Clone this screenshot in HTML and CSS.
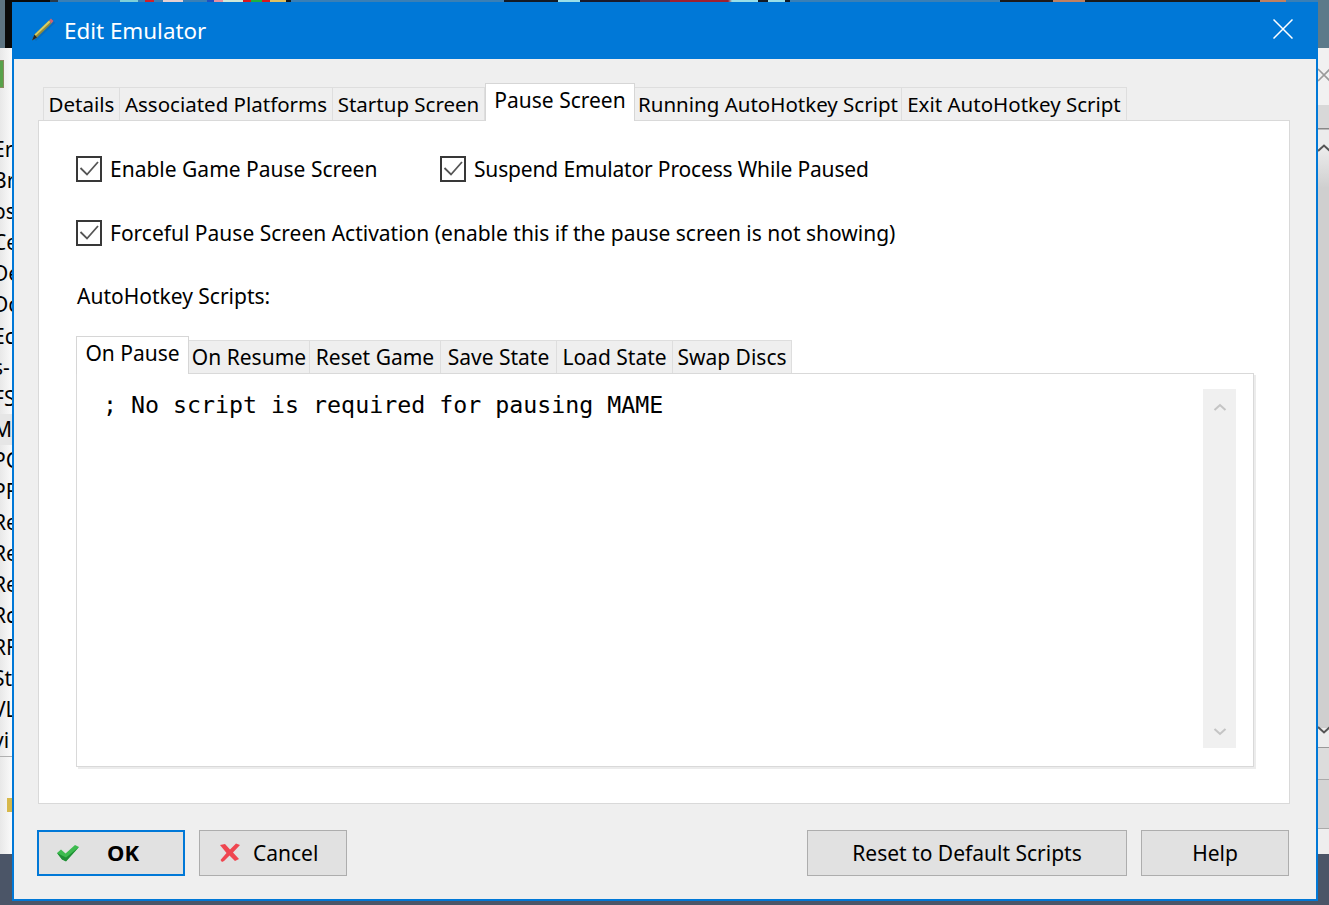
FILE: index.html
```html
<!DOCTYPE html>
<html lang="en">
<head>
<meta charset="utf-8">
<title>Edit Emulator</title>
<link rel="stylesheet" href="styles.css">
</head>
<body>
<div class="desktop">
  <div class="strip"></div>
  <div class="behind-left">
    <div class="green-icon"></div>
    <ul class="behind-list">
      <li>Er</li><li>Br</li><li>os</li><li>Ce</li><li>De</li><li>Dc</li><li>Ec</li><li>s-</li><li>FS</li><li class="sel">M/</li><li>PC</li><li>PF</li><li>Re</li><li>Re</li><li>Re</li><li>Rc</li><li>RF</li><li>St</li><li>VL</li><li class="last">vi</li>
    </ul>
    <div class="yellow-icon"></div>
  </div>
  <div class="behind-right">
    <svg class="behind-x" viewBox="0 0 14 14"><path d="M1 1L13 13M13 1L1 13" stroke="#9a9a9a" stroke-width="1.6" fill="none"/></svg>
    <svg class="behind-up" viewBox="0 0 14 8"><path d="M1 7L7 1.500L13 7" stroke="#555" stroke-width="2" fill="none"/></svg>
    <svg class="behind-down" viewBox="0 0 14 8"><path d="M1 1L7 6.500L13 1" stroke="#555" stroke-width="2" fill="none"/></svg>
  </div>

  <div class="dialog">
    <header class="titlebar">
      <svg class="pencil" viewBox="0 0 24 24">
        <path d="M5 24L24 6L21 1.500L1.500 20.500Z" fill="#0a5da8" opacity="0.45"/>
        <path d="M3.500 17.500L18 3.500L20.500 6.500L6 20.500L1 23.500Z" fill="#8f8a3c"/>
        <path d="M3.500 17.500L18 3.500L19.500 5L4.500 19Z" fill="#d8cd62"/>
        <path d="M3.500 17.500L1 23.500L6 20.500Z" fill="#262626"/>
        <path d="M18 3.500L20 1.500L22.500 4L20.500 6.500Z" fill="#cf6470"/>
      </svg>
      <span class="title">Edit Emulator</span>
      <svg class="close" viewBox="0 0 20 20"><path d="M0.500 0.500L19.500 19.500M19.500 0.500L0.500 19.500" stroke="#fff" stroke-width="1.500" fill="none"/></svg>
    </header>
    <div class="client">
      <nav class="tabs outer-tabs">
        <span class="tab">Details</span>
        <span class="tab">Associated Platforms</span>
        <span class="tab">Startup Screen</span>
        <span class="tab active">Pause Screen</span>
        <span class="tab">Running AutoHotkey Script</span>
        <span class="tab">Exit AutoHotkey Script</span>
      </nav>
      <section class="panel">
        <div class="check-row">
          <label class="check check-first"><span class="box"><svg viewBox="0 0 22 22"><path d="M2.500 10L9 16.500L20 4" stroke="#555" stroke-width="1.800" fill="none"/></svg></span>Enable Game Pause Screen</label>
          <label class="check check-tight"><span class="box"><svg viewBox="0 0 22 22"><path d="M2.500 10L9 16.500L20 4" stroke="#555" stroke-width="1.800" fill="none"/></svg></span>Suspend Emulator Process While Paused</label>
        </div>
        <div class="check-row second">
          <label class="check"><span class="box"><svg viewBox="0 0 22 22"><path d="M2.500 10L9 16.500L20 4" stroke="#555" stroke-width="1.800" fill="none"/></svg></span>Forceful Pause Screen Activation (enable this if the pause screen is not showing)</label>
        </div>
        <div class="scripts-label">AutoHotkey Scripts:</div>
        <nav class="tabs inner-tabs">
          <span class="tab active">On Pause</span>
          <span class="tab">On Resume</span>
          <span class="tab">Reset Game</span>
          <span class="tab">Save State</span>
          <span class="tab">Load State</span>
          <span class="tab">Swap Discs</span>
        </nav>
        <div class="editor-wrap">
          <div class="editor">
            <pre class="code">; No script is required for pausing MAME</pre>
            <div class="scrollbar">
              <svg viewBox="0 0 14 8"><path d="M1.500 7L7 2L12.500 7" stroke="#c4c4c4" stroke-width="2" fill="none"/></svg>
              <svg viewBox="0 0 14 8"><path d="M1.500 1L7 6L12.500 1" stroke="#c4c4c4" stroke-width="2" fill="none"/></svg>
            </div>
          </div>
        </div>
      </section>
      <footer class="buttons">
        <button class="btn btn-ok" type="button">
          <svg class="btn-icon" viewBox="0 0 24 20"><path d="M1 10L5 6.500L9.500 10.500L19 2L23 4L10 18L6 16.500Z" fill="#3dbb4f"/><path d="M1 10L6 16.500L10 18.500L23 4L10 14.500Z" fill="#1f8f35"/></svg>
          <span class="ok-text">OK</span>
        </button>
        <button class="btn btn-cancel" type="button">
          <svg class="btn-icon" viewBox="0 0 24 20"><path d="M1 2L6 1L11 6.500L17 0.500L21 2L14 9.500L20 16L16 18L10.500 12.500L5 18L3 19L1.500 17L7.500 10Z" fill="#ef4650"/></svg>
          <span>Cancel</span>
        </button>
        <span class="spacer"></span>
        <button class="btn btn-reset" type="button">Reset to Default Scripts</button>
        <button class="btn btn-help" type="button">Help</button>
      </footer>
    </div>
  </div>
</div>
</body>
</html>
```
FILE: styles.css
```css
* { box-sizing: border-box; }
html, body { margin: 0; padding: 0; }
body { width: 1329px; height: 905px; overflow: hidden; background: #4b5567; font-family: "Noto Sans", sans-serif; color: #000; }

.desktop { position: relative; width: 1329px; height: 905px; overflow: hidden; background: #4b5567; }

/* Parts of other windows showing behind the dialog */
.strip { position: absolute; left: 0; top: 0; width: 1329px; height: 48px;
  background: linear-gradient(90deg,
    #5d7482 0 5px, #0a0a0a 5px 50px, #2a3a4a 50px 58px, #3a7fb5 58px 120px, #7fd0d8 120px 138px, #3a7fb5 138px 145px,
    #d0202a 145px 154px, #3a7fb5 154px 163px, #e8d0d0 163px 183px, #3a7fb5 183px 207px, #2050c0 207px 214px, #e890a0 214px 223px,
    #d0e8d8 223px 243px, #d81820 243px 251px, #20b040 251px 262px, #d81820 262px 270px, #e0c060 270px 286px, #1a1a1a 286px 291px,
    #3a7fb5 291px 504px, #141a24 504px 558px, #9adfe8 558px 580px, #1a1a2a 580px 640px, #503050 640px 670px, #a02030 670px 728px,
    #9adfe8 732px 758px, #141a24 758px 768px, #9adfe8 768px 785px, #141a24 785px 790px, #3a7fb5 790px 1000px, #1a1a1a 1000px 1053px,
    #c08060 1053px 1085px, #1a1a1a 1085px 1260px, #c08060 1260px 1286px, #3a7fb5 1286px 1318px, #5c7a8a 1318px 1329px); }
.behind-left { position: absolute; left: 0; top: 48px; width: 12px; height: 806px; background: linear-gradient(90deg, #e8e8e8, #fafafa); overflow: hidden; border-bottom: 0; }
.green-icon { position: absolute; left: -10px; top: 12px; width: 14px; height: 28px; background: #58a24a; border: 1px solid #8a8a60; }
.behind-list { position: absolute; left: -7px; top: 86px; margin: 0; padding: 0; list-style: none; font-size: 21px; line-height: 31.100px; white-space: nowrap; }
.behind-list .sel { background: #e6e6e6; width: 20px; }
.behind-list .last { border-bottom: 1px solid #b0b0b0; width: 20px; height: 32px; }
.yellow-icon { position: absolute; left: 7px; top: 750px; width: 6px; height: 14px; background: #d7b84b; }
.behind-right { position: absolute; left: 1318px; top: 48px; width: 11px; height: 806px;
  background: linear-gradient(#f1f1f1 0, #f1f1f1 57px, #d8d8d8 57px, #d8d8d8 80px, #888 80px, #888 81px, #ececec 82px, #ececec 100px, #cfcfcf 140px, #cfcfcf 680px, #ececec 680px, #ececec 699px, #999 699px, #999 700px, #dcdcdc 700px, #dcdcdc 731px, #aaa 731px, #aaa 732px, #d4d4d4 732px, #d4d4d4 780px, #aaa 780px, #aaa 781px, #eee 781px); }
.behind-x { position: absolute; left: -1px; top: 20px; width: 14px; height: 14px; }
.behind-up { position: absolute; left: -1px; top: 96px; width: 14px; height: 8px; }
.behind-down { position: absolute; left: -1px; top: 678px; width: 14px; height: 8px; }

/* Dialog */
.dialog { position: absolute; left: 12px; top: 2px; width: 1306px; height: 899px; display: flex; flex-direction: column; background: #0078d7; padding: 0 2px 2px 2px; }
.titlebar { height: 57px; flex: none; display: flex; align-items: center; padding: 0 23px 0 17px; color: #fff; }
.pencil { width: 24px; height: 24px; flex: none; margin-top: -3px; filter: blur(0.3px); }
.title { font-size: 22.400px; margin-left: 9px; }
.close { width: 20px; height: 20px; margin-left: auto; margin-top: -3px; }

.client { flex: 1; background: #efefef; display: flex; flex-direction: column; padding: 24px 26px 0 24px; }

.tabs { display: grid; align-items: end; flex: none; height: 37px; line-height: 30px; }
.tab { display: block; height: 33px; background: #efefef; border: 1px solid #dedede; border-bottom: 0; border-left-width: 0; padding-top: 1px; text-align: center; white-space: nowrap; position: relative; }
.tab:first-child { border-left-width: 1px; }
.tab.active { background: #fff; border-left-width: 1px; margin-bottom: -1px; border-color: #d6d6d6; z-index: 1; height: 38px; }

.outer-tabs { margin-left: 5px; font-size: 20.500px; grid-template-columns: 77px 213px 152px 150px 267px 225px; justify-content: start; }
.outer-tabs .active { font-size: 21px; }
.panel { flex: none; height: 684px; background: #fff; border: 1px solid #d9d9d9; padding: 0 34px 0 37px; display: flex; flex-direction: column; }

.check-row { display: flex; height: 30px; margin-top: 33px; font-size: 21px; line-height: 30px; }
.check-row.second { margin-top: 34px; }
.check { display: flex; align-items: center; white-space: nowrap; }
.check-first { width: 364px; }
.check-tight { letter-spacing: -0.160px; }
.box { display: block; width: 26px; height: 26px; border: 2px solid #383838; margin-right: 8px; background: #fff; flex: none; }
.box svg { display: block; width: 22px; height: 22px; }
.scripts-label { margin-top: 33px; height: 30px; font-size: 21px; line-height: 30px; padding-left: 1px; }

.inner-tabs { margin-top: 25px; font-size: 21px; grid-template-columns: 113px 121px 131px 116px 116px 119px; justify-content: start; }
.editor-wrap { flex: none; height: 394px; background: #fff; width: 1178px; border: 1px solid #d9d9d9; box-shadow: 2px 2px 0 #ececec; padding: 15px 17px 18px 0; }
.editor { display: flex; height: 359px; }
.code { flex: 1; margin: 0; padding: 0 0 0 26px; font-family: "DejaVu Sans Mono", monospace; font-size: 23.280px; line-height: 32px; }
.scrollbar { width: 33px; flex: none; background: #f0f0f0; display: flex; flex-direction: column; justify-content: space-between; align-items: center; padding: 14px 0 12px; }
.scrollbar svg { display: block; width: 14px; height: 8px; }

.buttons { display: flex; flex: none; padding-top: 26px; margin: 0 1px 0 -1px; font-size: 21px; }
.btn { display: flex; align-items: center; justify-content: center; height: 46px; font: inherit; color: #000; background: #e1e1e1; border: 1px solid #adadad; padding: 0; }
.btn-ok { width: 148px; border: 2px solid #0078d7; justify-content: flex-start; padding-left: 17px; }
.btn-cancel { width: 148px; margin-left: 14px; justify-content: flex-start; padding-left: 19px; }
.btn-icon { width: 24px; height: 20px; flex: none; filter: blur(0.6px); }
.btn-cancel .btn-icon { margin-right: 10px; }
.ok-text { font-weight: 700; font-size: 22px; line-height: 28px; margin: -2px 0 0 27px; }
.spacer { flex: 1; }
.btn-reset { width: 320px; }
.btn-help { width: 148px; margin-left: 14px; }
```
